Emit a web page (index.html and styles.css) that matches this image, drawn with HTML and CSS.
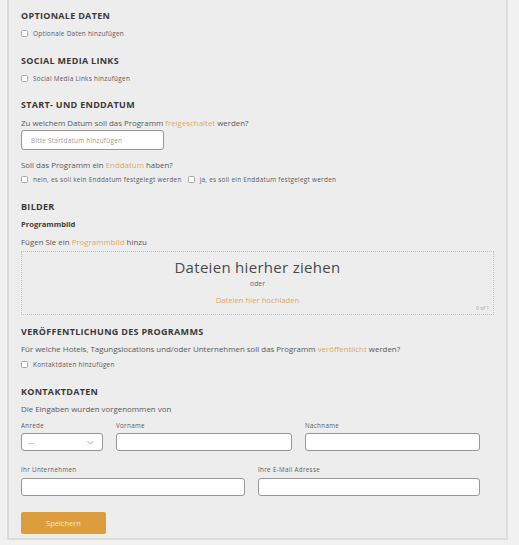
FILE: index.html
```html
<!DOCTYPE html>
<html lang="de">
<head>
<meta charset="utf-8">
<title>Programm</title>
<link rel="stylesheet" href="styles.css">
</head>
<body>
<div class="panel">
  <section class="section first">
    <h2 class="heading">OPTIONALE DATEN</h2>
    <label class="check"><input type="checkbox"><span>Optionale Daten hinzufügen</span></label>
  </section>

  <section class="section">
    <h2 class="heading">SOCIAL MEDIA LINKS</h2>
    <label class="check"><input type="checkbox"><span>Social Media Links hinzufügen</span></label>
  </section>

  <section class="section">
    <h2 class="heading">START- UND ENDDATUM</h2>
    <p class="text">Zu welchem Datum soll das Programm <span class="accent">freigeschaltet</span> werden?</p>
    <input class="field date" type="text" placeholder="Bitte Startdatum hinzufügen">
    <p class="text after-field">Soll das Programm ein <span class="accent">Enddatum</span> haben?</p>
    <div class="check-row">
      <label class="check"><input type="checkbox"><span>nein, es soll kein Enddatum festgelegt werden</span></label>
      <label class="check"><input type="checkbox"><span>ja, es soll ein Enddatum festgelegt werden</span></label>
    </div>
  </section>

  <section class="section">
    <h2 class="heading">BILDER</h2>
    <p class="text sub">Programmbild</p>
    <p class="text sub-next">Fügen Sie ein <span class="accent">Programmbild</span> hinzu</p>
    <div class="dropzone">
      <div class="drop-title">Dateien hierher ziehen</div>
      <div class="drop-or">oder</div>
      <div class="drop-link">Dateien hier hochladen</div>
      <div class="drop-count">0 of 1</div>
    </div>
  </section>

  <section class="section tight">
    <h2 class="heading">VERÖFFENTLICHUNG DES PROGRAMMS</h2>
    <p class="text">Für welche Hotels, Tagungslocations und/oder Unternehmen soll das Programm <span class="accent">veröffentlicht</span> werden?</p>
    <label class="check after-text"><input type="checkbox"><span>Kontaktdaten hinzufügen</span></label>
  </section>

  <section class="section">
    <h2 class="heading">KONTAKTDATEN</h2>
    <p class="text">Die Eingaben wurden vorgenommen von</p>
    <div class="form-row row-three">
      <div class="col">
        <div class="label">Anrede</div>
        <div class="field select"><span>---</span>
          <svg class="chev" width="7" height="5" viewBox="0 0 7 5"><path d="M0.5 1 L3.5 4 L6.5 1" fill="none" stroke="#9a9a9a" stroke-width="0.8"/></svg>
        </div>
      </div>
      <div class="col">
        <div class="label">Vorname</div>
        <input class="field" type="text">
      </div>
      <div class="col">
        <div class="label">Nachname</div>
        <input class="field" type="text">
      </div>
    </div>
    <div class="form-row row-two">
      <div class="col">
        <div class="label">Ihr Unternehmen</div>
        <input class="field" type="text">
      </div>
      <div class="col">
        <div class="label">Ihre E-Mail Adresse</div>
        <input class="field" type="text">
      </div>
    </div>
    <button class="btn" type="button">Speichern</button>
  </section>
</div>
</body>
</html>
```
FILE: styles.css
```css
* { box-sizing: border-box; }

html, body {
  margin: 0;
  padding: 0;
  background: #f1f1f1;
  font-family: "Open Sans", "DejaVu Sans", sans-serif;
  color: #555;
}

.panel {
  margin-left: 7px;
  width: 501px;
  background: #ededed;
  border-left: 2px solid #dcdcdc;
  border-right: 2px solid #dcdcdc;
  border-bottom: 2px solid #dcdcdc;
  padding: 9px 12px 4px 12px;
}

.section { margin-top: 13px; }
.section.first { margin-top: 0; }
.section.tight { margin-top: 10px; }

.heading {
  margin: 0 0 3.5px 0;
  font-size: 9px;
  line-height: 14px;
  font-weight: 700;
  letter-spacing: 0.3px;
  color: #3a3a3a;
}

.text {
  margin: 0;
  font-size: 7.9px;
  line-height: 14px;
  color: #585858;
}
.text.sub { font-weight: 700; color: #3d3d3d; font-size: 7.6px; }
.text.sub-next { margin-top: 4.3px; }
.text.after-field { margin-top: 7.5px; }

.accent { color: #e0a965; }

.check {
  display: flex;
  align-items: center;
  height: 14px;
  font-size: 6.4px;
  letter-spacing: 0.27px;
  color: #5a5a5a;
}
.check input {
  -webkit-appearance: none;
  appearance: none;
  width: 7px;
  height: 7px;
  margin: 0 5px 0 0;
  border: 1px solid #a8a8a8;
  border-radius: 1.5px;
  background: #fff;
}
.check.after-text { margin-top: 1.4px; }

.check-row {
  display: flex;
  gap: 6px;
  margin-top: 1.2px;
}

.field {
  display: block;
  width: 100%;
  height: 18px;
  margin: 0;
  border: 1px solid #979797;
  border-radius: 3px;
  background: #fff;
  font-family: inherit;
  font-size: 6.4px;
  padding: 0 9px;
  color: #555;
  outline: none;
}
.field::placeholder { color: #9a9a9a; letter-spacing: 0.25px; }
.field.date {
  width: 143px;
  height: 20px;
  margin-top: 0.5px;
}

.dropzone {
  position: relative;
  margin-top: 1.2px;
  height: 64px;
  border: 1px dotted #e2bd7c;
  text-align: center;
  padding-top: 6px;
}
.drop-title {
  font-size: 15px;
  line-height: 19px;
  font-weight: 400;
  color: #4a4a4a;
  letter-spacing: 0.3px;
}
.drop-or {
  margin-top: 1px;
  font-size: 6.8px;
  line-height: 12px;
  color: #666;
}
.drop-link {
  margin-top: 4px;
  font-size: 7.7px;
  line-height: 12px;
  color: #e0a965;
}
.drop-count {
  position: absolute;
  right: 4px;
  bottom: 3px;
  font-size: 5px;
  color: #999;
}

.form-row {
  display: grid;
  width: 459px;
  column-gap: 13px;
}
.row-three {
  grid-template-columns: 82px 176px 1fr;
  margin-top: 5.4px;
}
.row-two {
  grid-template-columns: 224px 1fr;
  margin-top: 13.6px;
}
.label {
  font-size: 6.2px;
  line-height: 10px;
  letter-spacing: 0.35px;
  color: #5a5a5a;
  margin-bottom: 2px;
}
.row-two .label { margin-bottom: 3px; }

.select {
  display: flex;
  align-items: center;
  justify-content: space-between;
  padding: 0 8px 0 6px;
  color: #999;
}

.btn {
  display: block;
  margin-top: 15.7px;
  width: 85px;
  height: 22px;
  border: none;
  border-radius: 2px;
  background: #dd9d3e;
  color: #fbe5c4;
  font-family: inherit;
  font-size: 7.5px;
  padding: 0;
}
```
